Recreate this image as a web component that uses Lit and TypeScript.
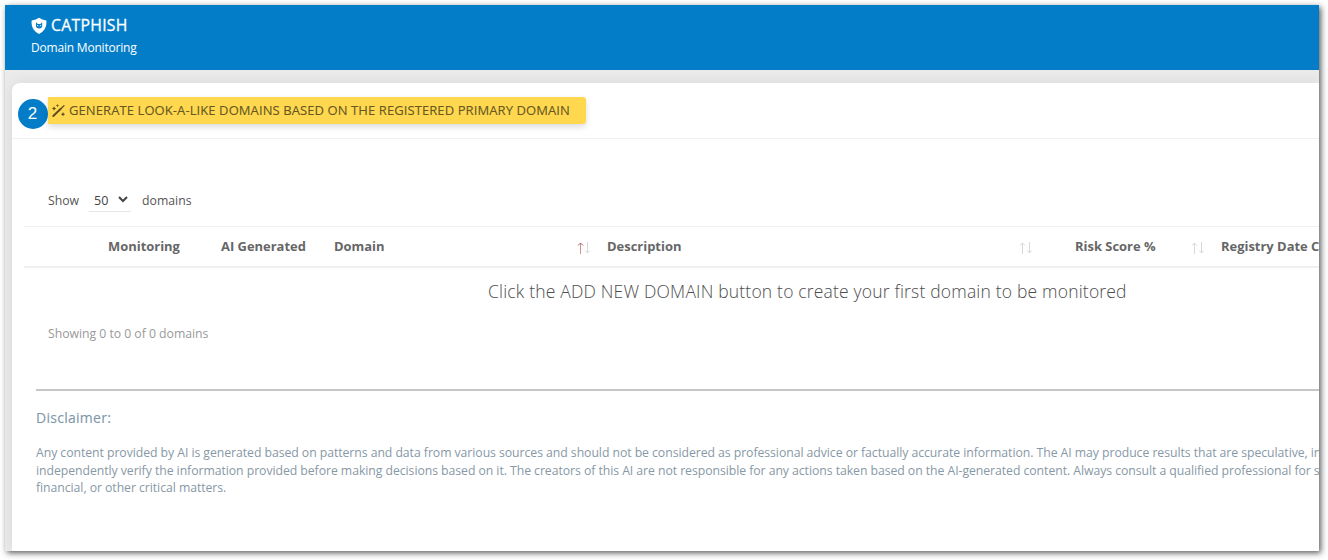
import { LitElement, html, css, svg } from "lit";
import { customElement, property } from "lit/decorators.js";

@customElement("sort-arrows")
class SortArrows extends LitElement {
  @property({ type: Boolean }) ascending = false;

  static styles = css`
    :host { display: block; width: 13px; height: 13px; }
    svg { display: block; }
    path { fill: none; stroke: #d8d8d8; }
    .active { stroke: #e08d90; }
    .head { stroke: #a06a6c; }
  `;

  render() {
    return html`<svg width="13" height="13" viewBox="0 0 13 13">
      ${svg`<path class=${this.ascending ? "active" : ""} d="M3.5 1V12"/>
      <path class=${this.ascending ? "head" : ""} d="M1 3.5L3.5 1L6 3.5"/>
      <path d="M10.5 0V11M8.300 8.7L10.5 11L12.7 8.7"/>`}
    </svg>`;
  }
}

@customElement("app-root")
class AppRoot extends LitElement {
  static styles = css`
    :host {
      display: block;
      box-sizing: border-box;
      width: 1328px;
      height: 560px;
      padding: 5px 9px 9px 5px;
      overflow: hidden;
      background: #fff;
      font-family: "Open Sans", sans-serif;
      font-size: 12.25px;
      white-space: nowrap;
    }
    * { box-sizing: border-box; }
    .frame {
      display: flex;
      flex-direction: column;
      height: 546px;
      background: #ebebeb;
      box-shadow: 2px 2px 6px rgba(0, 0, 0, 0.65);
    }
    .window { display: flex; flex-direction: column; flex: 1; overflow: hidden; }
    header {
      height: 65px;
      padding: 10px 0 0 26px;
      background: #037dc8;
      color: #fff;
      flex: none;
    }
    .brand { display: flex; align-items: center; height: 21px; gap: 4px; }
    .brand h1 {
      margin: 0;
      font-size: 15.75px;
      font-weight: 500;
      line-height: 21px;
      letter-spacing: 0.3px;
      -webkit-text-stroke: 0.3px currentColor;
    }
    .sub { margin-top: 3px; font-size: 12px; line-height: 18px; letter-spacing: -0.2px; }
    main {
      flex: 1;
      margin: 13px 0 0 7px;
      background: #fff;
      border-radius: 8px 0 0 0;
      box-shadow: 0 0 15px rgba(0, 0, 0, 0.09);
    }
    .toolbar {
      display: flex;
      align-items: flex-start;
      height: 56px;
      padding: 14px 0 0 5.5px;
      border-bottom: 1px solid #f0f0f0;
    }
    .step {
      width: 30px;
      height: 30px;
      margin: 1.500px 0.500px 0 0;
      border-radius: 50%;
      background: #037dc8;
      color: #fff;
      font: 17px/30px "Liberation Sans", sans-serif;
      text-align: center;
    }
    .generate {
      display: flex;
      align-items: center;
      width: 538px;
      height: 27px;
      padding: 0 0 0 4px;
      gap: 4px;
      border: 0;
      border-radius: 0 3px 3px 0;
      background: #ffd84f;
      box-shadow: 0 3px 6px rgba(0, 0, 0, 0.14);
      color: #665723;
      font: 500 13px/27px "Open Sans", sans-serif;
      letter-spacing: 0.09px;
      -webkit-text-stroke: 0.12px currentColor;
    }
    .length {
      display: flex;
      align-items: center;
      height: 24px;
      margin: 49px 0 0 36px;
      color: #555;
    }
    .select {
      display: flex;
      align-items: center;
      justify-content: space-between;
      width: 42px;
      height: 24px;
      margin: 0 11px 0 10px;
      padding: 1px 3px 0 5px;
      border-bottom: 1px solid #e6e6e6;
      color: #444;
      font-size: 12.6px;
    }
    .select svg { margin-top: -2px; }
    .columns {
      display: grid;
      grid-template-columns: 84px 113px 113px 243px 30px 412px 56px 116px 30px 99px;
      align-items: center;
      width: 1296px;
      height: 42px;
      margin: 14px 0 0 12px;
      padding-bottom: 2px;
      border-top: 1px solid #f0f0f0;
      border-bottom: 2px solid #f0f0f0;
      color: #666;
      font-size: 12.95px;
      font-weight: 700;
      overflow: hidden;
    }
    .columns sort-arrows { margin-top: 6px; }
    .empty {
      margin: 9px 0 0 476px;
      color: #4d4d4d;
      font-size: 17.5px;
      font-weight: 300;
      line-height: 28px;
      letter-spacing: 0.185px;
    }
    .info { margin: 20px 0 0 36px; color: #999; line-height: 18px; letter-spacing: -0.03px; }
    hr { height: 2px; margin: 46px 0 0 24px; border: 0; background: #c6c6c6; }
    h2 {
      margin: 17px 0 0 24px;
      color: #8097a9;
      font-size: 14px;
      font-weight: 500;
      line-height: 20px;
      letter-spacing: 0.27px;
      -webkit-text-stroke: 0.12px currentColor;
    }
    .disclaimer { margin: 16px 0 0 24px; color: #8798a6; line-height: 17.5px; letter-spacing: -0.056px; }
  `;

  private columns = [
    ["", ""], ["Monitoring", ""], ["AI Generated", ""], ["Domain", "asc"],
    ["Description", "both"], ["Risk Score %", "both"], ["Registry Date C", ""],
  ];

  private heading([label, sort]: string[]) {
    return html`<span>${label}</span>${sort ? html`<sort-arrows ?ascending=${sort === "asc"}></sort-arrows>` : ""}`;
  }

  render() {
    return html`
      <div class="frame"><div class="window">
        <header>
          <div class="brand">
            <svg width="16" height="18" viewBox="0 0 16 18">
              <path fill="#fff" d="M8 .8Q11 3 15.300 3.4Q16.6 12.8 8 17Q-.6 12.8 .7 3.4Q5 3 8 .8Z"/>
              <path fill="#037dc8" d="M5 5.3L6.8 6.9H9.4L11.2 5.3V9.5Q10.8 11.400 8.1 11.400Q5.400 11.400 5 9.5Z"/>
              <path stroke="#fff" stroke-width=".9" d="M6 8.3L7.400 9M10.2 8.3L8.800 9"/>
            </svg>
            <h1>CATPHISH</h1>
          </div>
          <div class="sub">Domain Monitoring</div>
        </header>
        <main>
          <div class="toolbar">
            <div class="step">2</div>
            <button class="generate">
              <svg width="13" height="14" viewBox="0 0 13 14">
                <path stroke="#5c4f20" stroke-width="2" stroke-linecap="round" d="M1.3 12L8.8 4.8"/>
                <path stroke="#5c4f20" stroke-width="1.3" stroke-linecap="round" d="M9.6 4L12 1.6"/>
                <path fill="#5c4f20" d="M2 2.3l.7 1.5 1.5.7-1.5.7L2 6.7l-.7-1.5L-.2 4.5l1.5-.7zM5.5 0l.5 1.100 1.100.5-1.100.5-.5 1.100-.5-1.100-1.100-.5 1.100-.5zM11 8l.7 1.500 1.500.7-1.500.7-.7 1.500-.7-1.500-1.500-.7 1.500-.7z"/>
              </svg>
              <span>GENERATE LOOK-A-LIKE DOMAINS BASED ON THE REGISTERED PRIMARY DOMAIN</span>
            </button>
          </div>
          <div class="length">
            <span>Show</span>
            <span class="select">50
              <svg width="10" height="7" viewBox="0 0 10 7"><path fill="none" stroke="#444" stroke-width="2" d="M1 1L5 5L9 1"/></svg>
            </span>
            <span>domains</span>
          </div>
          <div class="columns">${this.columns.map((c) => this.heading(c))}</div>
          <div class="empty">Click the ADD NEW DOMAIN button to create your first domain to be monitored</div>
          <div class="info">Showing 0 to 0 of 0 domains</div>
          <hr />
          <h2>Disclaimer:</h2>
          <div class="disclaimer">
            Any content provided by AI is generated based on patterns and data from various sources and should not be considered as professional advice or factually accurate information. The AI may produce results that are speculative, in<br />
            independently verify the information provided before making decisions based on it. The creators of this AI are not responsible for any actions taken based on the AI-generated content. Always consult a qualified professional for s<br />
            financial, or other critical matters.
          </div>
        </main>
      </div></div>
    `;
  }
}
